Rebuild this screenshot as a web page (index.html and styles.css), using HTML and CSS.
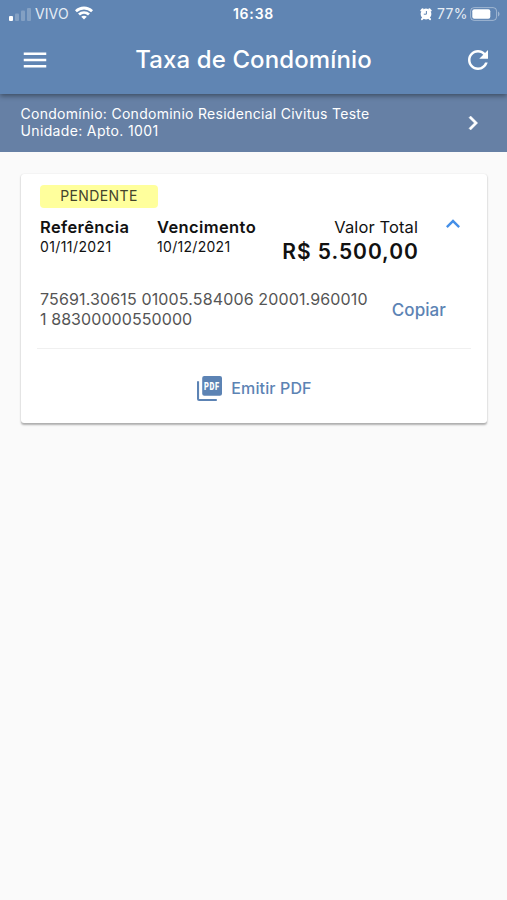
FILE: index.html
```html
<!DOCTYPE html>
<html lang="pt-BR">
<head>
<meta charset="utf-8">
<title>Taxa de Condomínio</title>
<link rel="stylesheet" href="styles.css">
</head>
<body>
<header class="header">
  <div class="status">
    <div class="status-side">
      <svg class="signal" viewBox="0 0 22 14" fill="#fff"><rect x="0" y="9" width="4" height="5" rx="1"/><g opacity=".22"><rect x="6" y="6.500" width="4" height="7.500" rx="1"/><rect x="12" y="3.500" width="4" height="10.500" rx="1"/><rect x="18" y="1" width="4" height="13" rx="1"/></g></svg>
      <span class="carrier">VIVO</span>
      <svg class="wifi" viewBox="0 0 18 14" fill="none" stroke="#fff" stroke-width="2.800"><path d="M.9 5.300C5.500.900 12.500.900 17.100 5.300M4 8.600c2.900-2.700 7.100-2.700 10 0"/><path d="M9 13.600 6.200 10.800c1.600-1.400 4-1.400 5.600 0z" fill="#fff" stroke="none"/></svg>
    </div>
    <span class="clock">16:38</span>
    <div class="status-side right">
      <svg class="alarm" viewBox="0 0 12 14"><circle cx="6" cy="7" r="5.400" fill="#fff"/><path d="M1.300 3.600 2.600 2.200M10.700 3.600 9.400 2.200M2 12.200l1.200-1.400M10 12.200l-1.200-1.400" stroke="#fff" stroke-width="2" stroke-linecap="round"/><path d="M6.400 4v3.200H3.800" fill="none" stroke="#6085b2" stroke-width="1"/></svg>
      <span class="percent">77%</span>
      <svg class="battery" viewBox="0 0 30 14"><rect x=".6" y=".6" width="26" height="12.800" rx="3.500" fill="none" stroke="#fff" stroke-opacity=".4"/><rect x="2.300" y="2.300" width="18" height="9.400" rx="2" fill="#fff"/><path d="M28 4.500c2 .8 2 4.200 0 5z" fill="#fff" opacity=".4"/></svg>
    </div>
  </div>
  <div class="appbar">
    <svg class="icon" viewBox="0 0 24 24" fill="#fff"><path d="M3 18h18v-2H3v2zm0-5h18v-2H3v2zm0-7v2h18V6H3z"/></svg>
    <h1 class="title">Taxa de Condomínio</h1>
    <svg class="icon" viewBox="0 0 24 24" fill="#fff"><path d="M17.650 6.350C16.200 4.900 14.210 4 12 4c-4.420 0-7.990 3.580-7.990 8s3.570 8 7.990 8c3.730 0 6.840-2.550 7.730-6h-2.080c-.82 2.330-3.040 4-5.650 4-3.310 0-6-2.690-6-6s2.690-6 6-6c1.660 0 3.140.69 4.220 1.780L13 11h7V4l-2.350 2.350z"/></svg>
  </div>
</header>
<section class="unit">
  <div class="unit-text">
    <div class="line-condo">Condomínio: Condominio Residencial Civitus Teste</div>
    <div class="line-unit">Unidade: Apto. 1001</div>
  </div>
  <svg class="chevron" viewBox="0 0 24 24" fill="#fff" stroke="#fff" stroke-width=".4"><path d="M10 6 8.590 7.410 13.170 12l-4.580 4.590L10 18l6-6z"/></svg>
</section>
<main class="card">
  <span class="badge">PENDENTE</span>
  <div class="summary">
    <div class="col-ref"><div class="label">Referência</div><div class="date">01/11/2021</div></div>
    <div class="col-due"><div class="label">Vencimento</div><div class="date due-date">10/12/2021</div></div>
    <div class="col-total"><div class="total-label">Valor Total</div><div class="total">R$ 5.500,00</div></div>
    <svg class="collapse" viewBox="0 0 24 24" fill="#448fe8"><path d="m12 8-6 6 1.410 1.410L12 10.830l4.590 4.580L18 14z"/></svg>
  </div>
  <div class="payment">
    <div class="barcode"><div class="code-a">75691.30615 01005.584006 20001.960010</div><div class="code-b">1 88300000550000</div></div>
    <span class="copy">Copiar</span>
  </div>
  <div class="emit">
    <svg class="pdf" viewBox="0 0 24 24" fill="#5c83b4"><path d="M7 0h15a2 2 0 0 1 2 2v15a2 2 0 0 1-2 2H7a2 2 0 0 1-2-2V2a2 2 0 0 1 2-2zM2 5H0v17a2 2 0 0 0 2 2h17v-2H2z"/><text class="pdf-text" transform="translate(6.600 13) scale(.72 1)">PDF</text></svg>
    <span class="emit-text">Emitir PDF</span>
  </div>
</main>
</body>
</html>
```
FILE: styles.css
```css
* { box-sizing: border-box; }
body { margin: 0; min-height: 900px; background: #fafafa; font-family: Inter, "Liberation Sans", sans-serif; color: #111; white-space: nowrap; }
svg { display: block; flex: none; }
.header { position: relative; height: 94px; background: #6085b3; color: #fff; box-shadow: 0 2px 5px rgba(0, 0, 0, .4); }
.status { height: 27px; display: grid; grid-template-columns: 1fr auto 1fr; align-items: center; padding: 0 7px 0 9px; }
.status-side { display: flex; align-items: center; color: #e6edf5; }
.right { justify-content: flex-end; }
.signal { width: 22px; height: 14px; }
.carrier { margin-left: 4px; font-size: 14px; line-height: 18px; letter-spacing: .1px; }
.wifi { width: 18px; height: 14px; margin: -1px 0 0 6px; }
.clock { margin-right: 2px; font-size: 14px; font-weight: 600; letter-spacing: .8px; }
.alarm { width: 12px; height: 14px; margin-right: 5px; }
.percent { font-size: 14px; letter-spacing: .4px; }
.battery { width: 30px; height: 14px; margin-left: 2px; }
.appbar { height: 66px; display: flex; align-items: center; justify-content: space-between; padding: 0 14px 0 20px; }
.icon { width: 30px; height: 30px; }
.title { margin: 0 6px 0 0; font-size: 24px; font-weight: 500; line-height: 30px; letter-spacing: .12px; }
.unit { height: 58px; display: flex; align-items: center; justify-content: space-between; padding: 0 20px 0 21px; background: #6680a5; color: #fff; font-size: 14px; line-height: 17px; letter-spacing: .28px; }
.unit-text { margin: -2px 0 0 -.5px; }
.line-unit { letter-spacing: .35px; }
.chevron { width: 28px; height: 28px; }
.card { width: 466px; height: 249px; margin: 22px 0 0 21px; padding: 11px 16px 0 19px; background: #fff; border-radius: 3px; box-shadow: 0 1.5px 2px rgba(0, 0, 0, .3), 0 0 1px rgba(0, 0, 0, .08); }
.badge { display: flex; align-items: center; justify-content: center; width: 118px; height: 23px; padding-bottom: 2px; border-radius: 4px; background: #ffff9c; color: #44442c; font-size: 14px; letter-spacing: .4px; }
.summary { display: flex; height: 74px; margin-top: 9px; }
.col-ref { width: 117px; }
.col-due { width: 110px; }
.col-total { flex: 1; text-align: right; }
.label { font-size: 16.500px; font-weight: 600; line-height: 21px; letter-spacing: .38px; }
.date { font-size: 14px; line-height: 17px; letter-spacing: .4px; }
.due-date { letter-spacing: .3px; }
.total-label { font-size: 16.500px; line-height: 21px; letter-spacing: .1px; }
.total { font-size: 21px; font-weight: 600; line-height: 27px; letter-spacing: .95px; margin-right: -.8px; }
.collapse { width: 28px; height: 28px; margin: -7px 4px 0 21px; }
.payment { display: flex; height: 58px; justify-content: space-between; align-items: flex-start; padding-right: 25px; }
.barcode { margin-top: -1px; color: #555; font-size: 16px; line-height: 19.500px; letter-spacing: .14px; }
.code-b { letter-spacing: .08px; }
.copy { color: #5c83b4; font-size: 17px; font-weight: 500; line-height: 20px; margin-top: 9px; letter-spacing: .07px; }
.emit { display: flex; justify-content: center; gap: 9px; align-items: center; height: 74px; margin: -1px 0 0 -3px; padding: 5px 0 0 1px; border-top: 1px solid #f0f0f0; }
.pdf { width: 25px; height: 25px; }
.pdf-text { font-family: Roboto, sans-serif; font-size: 10px; font-weight: 900; fill: #fff; letter-spacing: 1px; }
.emit-text { margin-top: -1px; color: #5c83b4; font-size: 16px; font-weight: 500; line-height: 20px; letter-spacing: .13px; }
```
